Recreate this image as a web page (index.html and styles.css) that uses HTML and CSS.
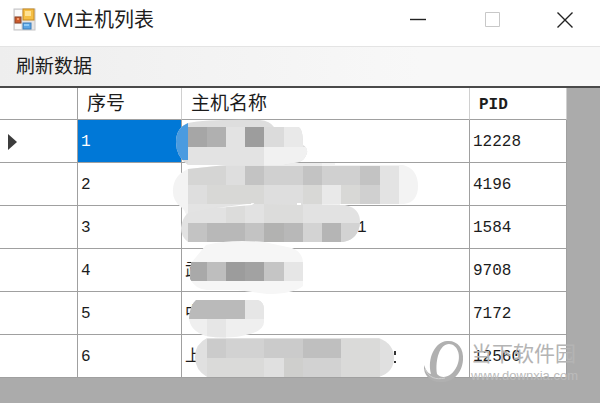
FILE: index.html
```html
<!DOCTYPE html>
<html lang="zh-CN">
<head>
<meta charset="utf-8">
<title>VM主机列表</title>
<link rel="stylesheet" href="styles.css">
</head>
<body>
<header class="titlebar">
  <svg class="app-icon" width="24" height="24" viewBox="0 0 24 24" aria-hidden="true">
    <rect x="1" y="1" width="21" height="21" fill="#e6e4e4" stroke="#c4c4c6"/>
    <rect x="2" y="2" width="7" height="6" fill="#fafafa"/>
    <rect x="2" y="16" width="6" height="5" fill="#fafafa"/>
    <rect x="10" y="1" width="11" height="11" fill="#f5bf45" stroke="#c88a20"/>
    <rect x="12" y="3" width="6" height="5" fill="#ffe294"/>
    <rect x="2" y="9" width="6" height="6" fill="#cc5a2c" stroke="#8e4629"/>
    <rect x="4" y="10" width="2" height="2" fill="#f29b68"/>
    <rect x="10" y="15" width="8" height="6" fill="#5aa5e6" stroke="#3c7cb8"/>
    <rect x="11" y="16" width="5" height="2" fill="#8fcbf8"/>
  </svg>
  <h1 class="title">VM主机列表</h1>
  <div class="window-buttons">
    <button class="window-button" type="button" aria-label="最小化">
      <svg width="16" height="16" viewBox="0 0 16 16"><path d="M0 7.5h16" stroke="#222" stroke-width="1.4"/></svg>
    </button>
    <button class="window-button" type="button" aria-label="最大化" disabled>
      <svg width="16" height="16" viewBox="0 0 16 16"><path d="M.5 .5h14v14h-14z" fill="none" stroke="#c8c8c8"/></svg>
    </button>
    <button class="window-button" type="button" aria-label="关闭">
      <svg width="16" height="16" viewBox="0 0 16 16"><path d="M.5 .5l15 15M15.500 .5l-15 15" stroke="#222" stroke-width="1.4"/></svg>
    </button>
  </div>
</header>
<nav class="toolbar">
  <button class="tool" type="button">刷新数据</button>
</nav>
<main class="grid">
  <table class="hosts">
    <colgroup>
      <col class="col-marker">
      <col class="col-no">
      <col class="col-name">
      <col class="col-pid">
    </colgroup>
    <thead>
      <tr><td></td><th>序号</th><th>主机名称</th><th>PID</th></tr>
    </thead>
    <tbody>
      <tr>
        <td class="marker"><svg width="9" height="16" viewBox="0 0 9 16"><path d="M0 0l9 8-9 8z" fill="#3c3c3c"/></svg></td>
        <td class="selected">1</td><td></td><td>12228</td>
      </tr>
      <tr><td></td><td>2</td><td></td><td>4196</td></tr>
      <tr><td></td><td>3</td><td class="tail">1</td><td>1584</td></tr>
      <tr><td></td><td>4</td><td>武</td><td>9708</td></tr>
      <tr><td></td><td>5</td><td>中</td><td>7172</td></tr>
      <tr><td></td><td>6</td><td>上</td><td>12560</td></tr>
    </tbody>
  </table>

  <!-- pixelated strokes over the host names -->
  <svg class="mosaic" width="600" height="315" viewBox="0 88 600 315" aria-hidden="true">
    <defs>
      <clipPath id="stroke1"><path d="M188 123q20-4 72-3q10 1 14 7h24q5 1 5 18q5 3 4 8q-2 7-8 9l-16 3H188q-12-8-12-23q0-14 12-19z"/></clipPath>
      <clipPath id="stroke2"><path d="M188 169l57-6h90v2h68q15 4 15 21q0 16-14 18h-64v22H188q-1-15-7-19q-9-7-8-18q1-14 15-20z"/></clipPath>
      <clipPath id="stroke3"><path d="M188 213l28-6 42-3 87 1q15 3 15 17q-1 17-17 20H188q-7-5-7-14q1-10 7-15z"/></clipPath>
      <clipPath id="stroke4"><path d="M206 245q24-6 58-3l28 6q11 4 11 16v22q-10 8-36 8l-30-4h-30q-12-1-17-11q0-7 1-16z"/></clipPath>
      <clipPath id="stroke5"><path d="M196 300h62q6 2 6 9v13q0 8-14 12-20 6-44 2-16-5-17-18 1-13 7-18z"/></clipPath>
      <clipPath id="stroke6"><path d="M207 338h172q15 6 15 20t-15 19H207q-12-7-12-20t12-19z"/></clipPath>
    </defs>
    <g clip-path="url(#stroke2)">
      <rect x="170" y="160" width="260" height="68" fill="#f3f3f3"/>
      <g transform="translate(187.6 127.3) scale(19.2)" shape-rendering="crispEdges">
        <path fill="#e2e2e2" d="M0 1h4v1h-4zM4 4h3v1h-3z"/>
        <path fill="#ececec" d="M4 1h3v1h-3z"/>
        <path fill="#d5d5d4" d="M0 2h2v1h-2zM5 2h1v1h-1zM10 2h1v1h-1z"/>
        <path fill="#dedede" d="M2 2h1v1h-1zM0 3h1v1h-1zM4 3h2v1h-2zM10 3h1v1h-1z"/>
        <path fill="#c3c3c3" d="M3 2h1v1h-1zM6 2h1v1h-1zM9 2h1v1h-1z"/>
        <path fill="#d0d0d0" d="M4 2h2v1h-2zM7 2h2v1h-2zM9 3h1v1h-1z"/>
        <path fill="#d8d8d6" d="M1 3h3v1h-3zM6 3h1v1h-1zM8 3h1v1h-1z"/>
        <path fill="#e9e9e9" d="M7 3h1v1h-1z"/>
        <path fill="#e3e3e3" d="M10 2h1v2h-1zM0 4h4v1h-4z"/>
      </g>
    </g>
    <g clip-path="url(#stroke1)">
      <rect x="170" y="115" width="140" height="50" fill="#dedede"/>
      <rect x="170" y="120" width="18" height="40" fill="#4a9be0"/>
      <g transform="translate(187.6 127.3) scale(19.2)" shape-rendering="crispEdges">
        <path fill="#a6a6a6" d="M0 0h1v1h-1z"/>
        <path fill="#b0b0b0" d="M1 0h1v1h-1z"/>
        <path fill="#e3e3e3" d="M2 0h1v1h-1zM0 1h4v1h-4z"/>
        <path fill="#9d9d9d" d="M3 0h1v1h-1z"/>
        <path fill="#dbdbdb" d="M4 0h1v1h-1z"/>
        <path fill="#e9e9e9" d="M5 0h1v1h-1z"/>
        <path fill="#f1f1f1" d="M4 1h3v1h-3z"/>
      </g>
    </g>
    <g clip-path="url(#stroke3)">
      <rect x="170" y="204" width="200" height="40" fill="#e2e2e2"/>
      <g transform="translate(187.6 127.3) scale(19.2)" shape-rendering="crispEdges">
        <path fill="#dcdcdb" d="M2 4h1v1h-1zM4 4h2v1h-2z"/>
        <path fill="#c3c3c3" d="M0 5h1v1h-1zM3 5h1v1h-1z"/>
        <path fill="#b8b8b8" d="M1 5h2v1h-2zM5 5h1v1h-1z"/>
        <path fill="#b2b2b1" d="M4 5h1v1h-1z"/>
        <path fill="#d3d3d3" d="M6 5h1v1h-1zM8 5h1v1h-1z"/>
        <path fill="#b5b5b5" d="M7 5h1v1h-1z"/>
      </g>
    </g>
    <path fill="#fff" d="M216 208l36-3h45v-2h-42zM251 203h50v2h-48z"/>
    <g clip-path="url(#stroke4)">
      <rect x="180" y="240" width="130" height="56" fill="#f6f6f6"/>
      <g transform="translate(187.6 127.3) scale(19.2)" shape-rendering="crispEdges">
        <path fill="#a9a9a9" d="M0 7h1v1h-1z"/>
        <path fill="#bebebe" d="M1 7h1v1h-1z"/>
        <path fill="#9c9c9c" d="M2 7h1v1h-1z"/>
        <path fill="#a2a2a2" d="M3 7h1v1h-1z"/>
        <path fill="#c5c5c5" d="M4 7h1v1h-1z"/>
        <path fill="#e6e6e6" d="M5 7h1v1h-1z"/>
      </g>
    </g>
    <g clip-path="url(#stroke5)">
      <rect x="180" y="298" width="90" height="42" fill="#efefef"/>
      <g transform="translate(187.6 127.3) scale(19.2)" shape-rendering="crispEdges">
        <path fill="#bababa" d="M0 9h3v1h-3z"/>
        <path fill="#e6e6e6" d="M3 9h1v1h-1zM1 10h1v1h-1z"/>
      </g>
    </g>
    <g clip-path="url(#stroke6)">
      <rect x="190" y="336" width="210" height="42" fill="#e0e0e0"/>
      <g transform="translate(187.6 127.3) scale(19.2)" shape-rendering="crispEdges">
        <path fill="#cbcbcb" d="M1 11h1v1h-1zM4 11h2v1h-2z"/>
        <path fill="#d2d2d2" d="M2 11h2v1h-2zM6 12h2v1h-2z"/>
        <path fill="#bfbfbf" d="M6 11h2v1h-2z"/>
        <path fill="#dadad9" d="M8 11h2v2h-2zM1 12h3v1h-3z"/>
        <path fill="#cfcfcd" d="M5 12h1v1h-1z"/>
      </g>
    </g>
    <path fill="#333" d="M394 351h2v4h-2zM394 361h2v2h-2z"/>
  </svg>

  <div class="watermark">
    <svg width="42" height="44" viewBox="0 0 42 44" aria-hidden="true">
      <path fill="#b0b0b0" fill-rule="evenodd" d="M24 1C34 0 41 8 40 20C39 34 29 43 17 42C7 42 0 35 1 25C3 31 6 34 8 34C4 18 12 2 24 1zM26 4C17 4 12 19 14 34C19 40 29 37 34 26C39 15 34 4 26 4z"/>
      <path fill="none" stroke="#d0d0d0" d="M2 29C6 38 13 40 22 38"/>
    </svg>
    <div class="watermark-text">
      <span class="watermark-name">当下软件园</span>
      <span class="watermark-url">www.downxia.com</span>
    </div>
  </div>
</main>
</body>
</html>
```
FILE: styles.css
```css
body {
  margin: 0;
  min-height: 100vh;
  display: flex;
  flex-direction: column;
  background: #fff;
  color: #1c1c1c;
  font-family: "Liberation Sans", "Noto Sans CJK SC", sans-serif;
}

button {
  border: 0;
  padding: 0;
  background: none;
  font: inherit;
  color: inherit;
}

/* Title bar */

.titlebar {
  display: flex;
  align-items: center;
  height: 46px;
  padding-left: 13px;
}

.app-icon {
  margin-right: 7px;
}

.title {
  margin: 0;
  padding-bottom: 6px;
  font-family: "Open Sans", "Noto Sans CJK SC", sans-serif;
  font-size: 20px;
  font-weight: normal;
  line-height: 34px;
}

.titlebar svg {
  display: block;
}

.app-icon,
.window-buttons {
  padding-bottom: 6px;
}

.window-buttons {
  display: flex;
  margin-left: auto;
}

.window-button {
  display: flex;
  align-items: center;
  justify-content: center;
  width: 75px;
  height: 40px;
}

.window-button:last-child {
  width: 70px;
}

/* Toolbar */

.toolbar {
  display: flex;
  align-items: center;
  height: 39px;
  padding-left: 16px;
  border-top: 1px solid #e4e4e4;
  border-bottom: 2px solid #4a4a4a;
  background: linear-gradient(to right, #eee, #f8f8f8 70%);
}

.tool {
  font-size: 19px;
  line-height: 30px;
}

/* Host table */

.grid {
  position: relative;
  flex: 1;
  background: #ababab;
}

.hosts {
  table-layout: fixed;
  width: 567px;
  border-spacing: 0;
  background: #fff;
  font-family: "Liberation Mono", "Noto Sans CJK SC", monospace;
  font-size: 16px;
  line-height: 20px;
}

.col-marker { width: 78px; }
.col-no { width: 104px; }
.col-name { width: 288px; }
.col-pid { width: 97px; }

.hosts th,
.hosts td {
  box-sizing: border-box;
  height: 43px;
  padding: 2px 3px 0;
  border-right: 1px solid #a0a0a0;
  border-bottom: 1px solid #a0a0a0;
  text-align: left;
}

.hosts thead th,
.hosts thead td {
  height: 32px;
  padding: 3px 9px 0;
  border-right-color: #d0d0d0;
  font-size: 19px;
  font-weight: normal;
}

.hosts thead th:last-child {
  font-size: 16px;
  font-weight: bold;
}

.hosts td:first-child {
  border-right-color: #a0a0a0;
}

.hosts .marker {
  padding-left: 8px;
}

.marker svg {
  display: block;
}

.hosts .selected {
  background: #0078d7;
  color: #fff;
}

.hosts .tail {
  padding-left: 175px;
}

.mosaic {
  position: absolute;
  top: 0;
  left: 0;
}

/* Watermark */

.watermark {
  position: absolute;
  right: 22px;
  bottom: 19px;
  display: flex;
  gap: 6px;
  color: #b4b4b4;
  white-space: nowrap;
}

.watermark-text {
  display: flex;
  flex-direction: column;
}

.watermark-name {
  font-size: 21px;
  line-height: 28px;
}

.watermark-url {
  color: #bbb;
  font-size: 13px;
  line-height: 16px;
}
```
